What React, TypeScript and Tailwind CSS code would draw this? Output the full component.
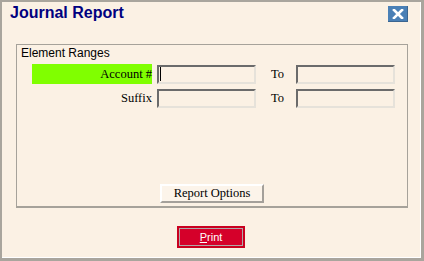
import React from 'react';

function Field({ caret }: { caret?: boolean }) {
  return (
    <div className="w-[99px] h-[19px] border-2 border-t-[#6b6b6b] border-l-[#6b6b6b] border-b-[#e6e2da] border-r-[#e6e2da] bg-[#fbf1e4] flex items-center pl-[1px]">
      {caret && <div className="w-[1px] h-[14px] bg-black" />}
    </div>
  );
}

function RangeRow({ label, highlight, caret }: { label: string; highlight?: boolean; caret?: boolean }) {
  return (
    <div className="flex items-center h-[20px]">
      <div
        className={
          'ml-[15px] w-[120px] h-[20px] flex items-center justify-end text-[12.5px] ' +
          (highlight ? 'bg-[#80ff00]' : '')
        }
      >
        {label}
      </div>
      <div className="ml-[5px]">
        <Field caret={caret} />
      </div>
      <div className="w-[40px] pl-[15px] text-[12.5px]">To</div>
      <Field />
    </div>
  );
}

export default function App() {
  return (
    <div className="w-[424px] h-[261px] border-t-2 border-l-2 border-r-[3px] border-b-[3px] border-[#a9a59d]">
      <div className="h-full border-r border-b border-white bg-[#fbf1e4] flex flex-col font-['Liberation_Serif',serif] text-black">
        <div className="h-[42px] flex justify-between items-start">
          <div className="pl-[8px] pt-[1px] text-[16px] leading-[20px] font-bold text-[#000080] font-['Liberation_Sans',Arial,sans-serif]">
            Journal Report
          </div>
          <div className="mt-[4px] mr-[12px] w-[20px] h-[16px] bg-[#4a80b6] border-b border-r border-[#3a6590] flex items-center justify-center">
            <svg width="12" height="10" viewBox="0 0 12 10">
              <path d="M2 1 L10 9 M10 1 L2 9" stroke="#fff" strokeWidth="2.6" strokeLinecap="square" />
            </svg>
          </div>
        </div>

        <div className="ml-[14px] w-[392px] h-[164px] border border-[#a6a29a] border-b-2 flex flex-col">
          <div className="pl-[4px] pt-[1px] text-[12px] leading-[14px] font-['Liberation_Sans',Arial,sans-serif]">
            Element Ranges
          </div>
          <div className="mt-[4px] flex flex-col gap-[4px]">
            <RangeRow label="Account #" highlight caret />
            <RangeRow label="Suffix" />
          </div>
          <div className="mt-auto mb-[3px] flex justify-center">
            <div className="w-[104px] h-[19px] border-2 border-t-white border-l-white border-b-[#a4a09a] border-r-[#a4a09a] bg-[#fcf4ea] flex items-center justify-center text-[12.5px]">
              Report Options
            </div>
          </div>
        </div>

        <div className="mt-[18px] flex justify-center">
          <div className="w-[68px] h-[22px] bg-[#d5002a] border-2 border-[#c9001f] flex">
            <div className="flex-1 border border-[#b0a8a8] flex items-center justify-center text-[11px] text-white font-['Liberation_Sans',Arial,sans-serif]">
              <span className="underline">P</span>rint
            </div>
          </div>
        </div>
      </div>
    </div>
  );
}
